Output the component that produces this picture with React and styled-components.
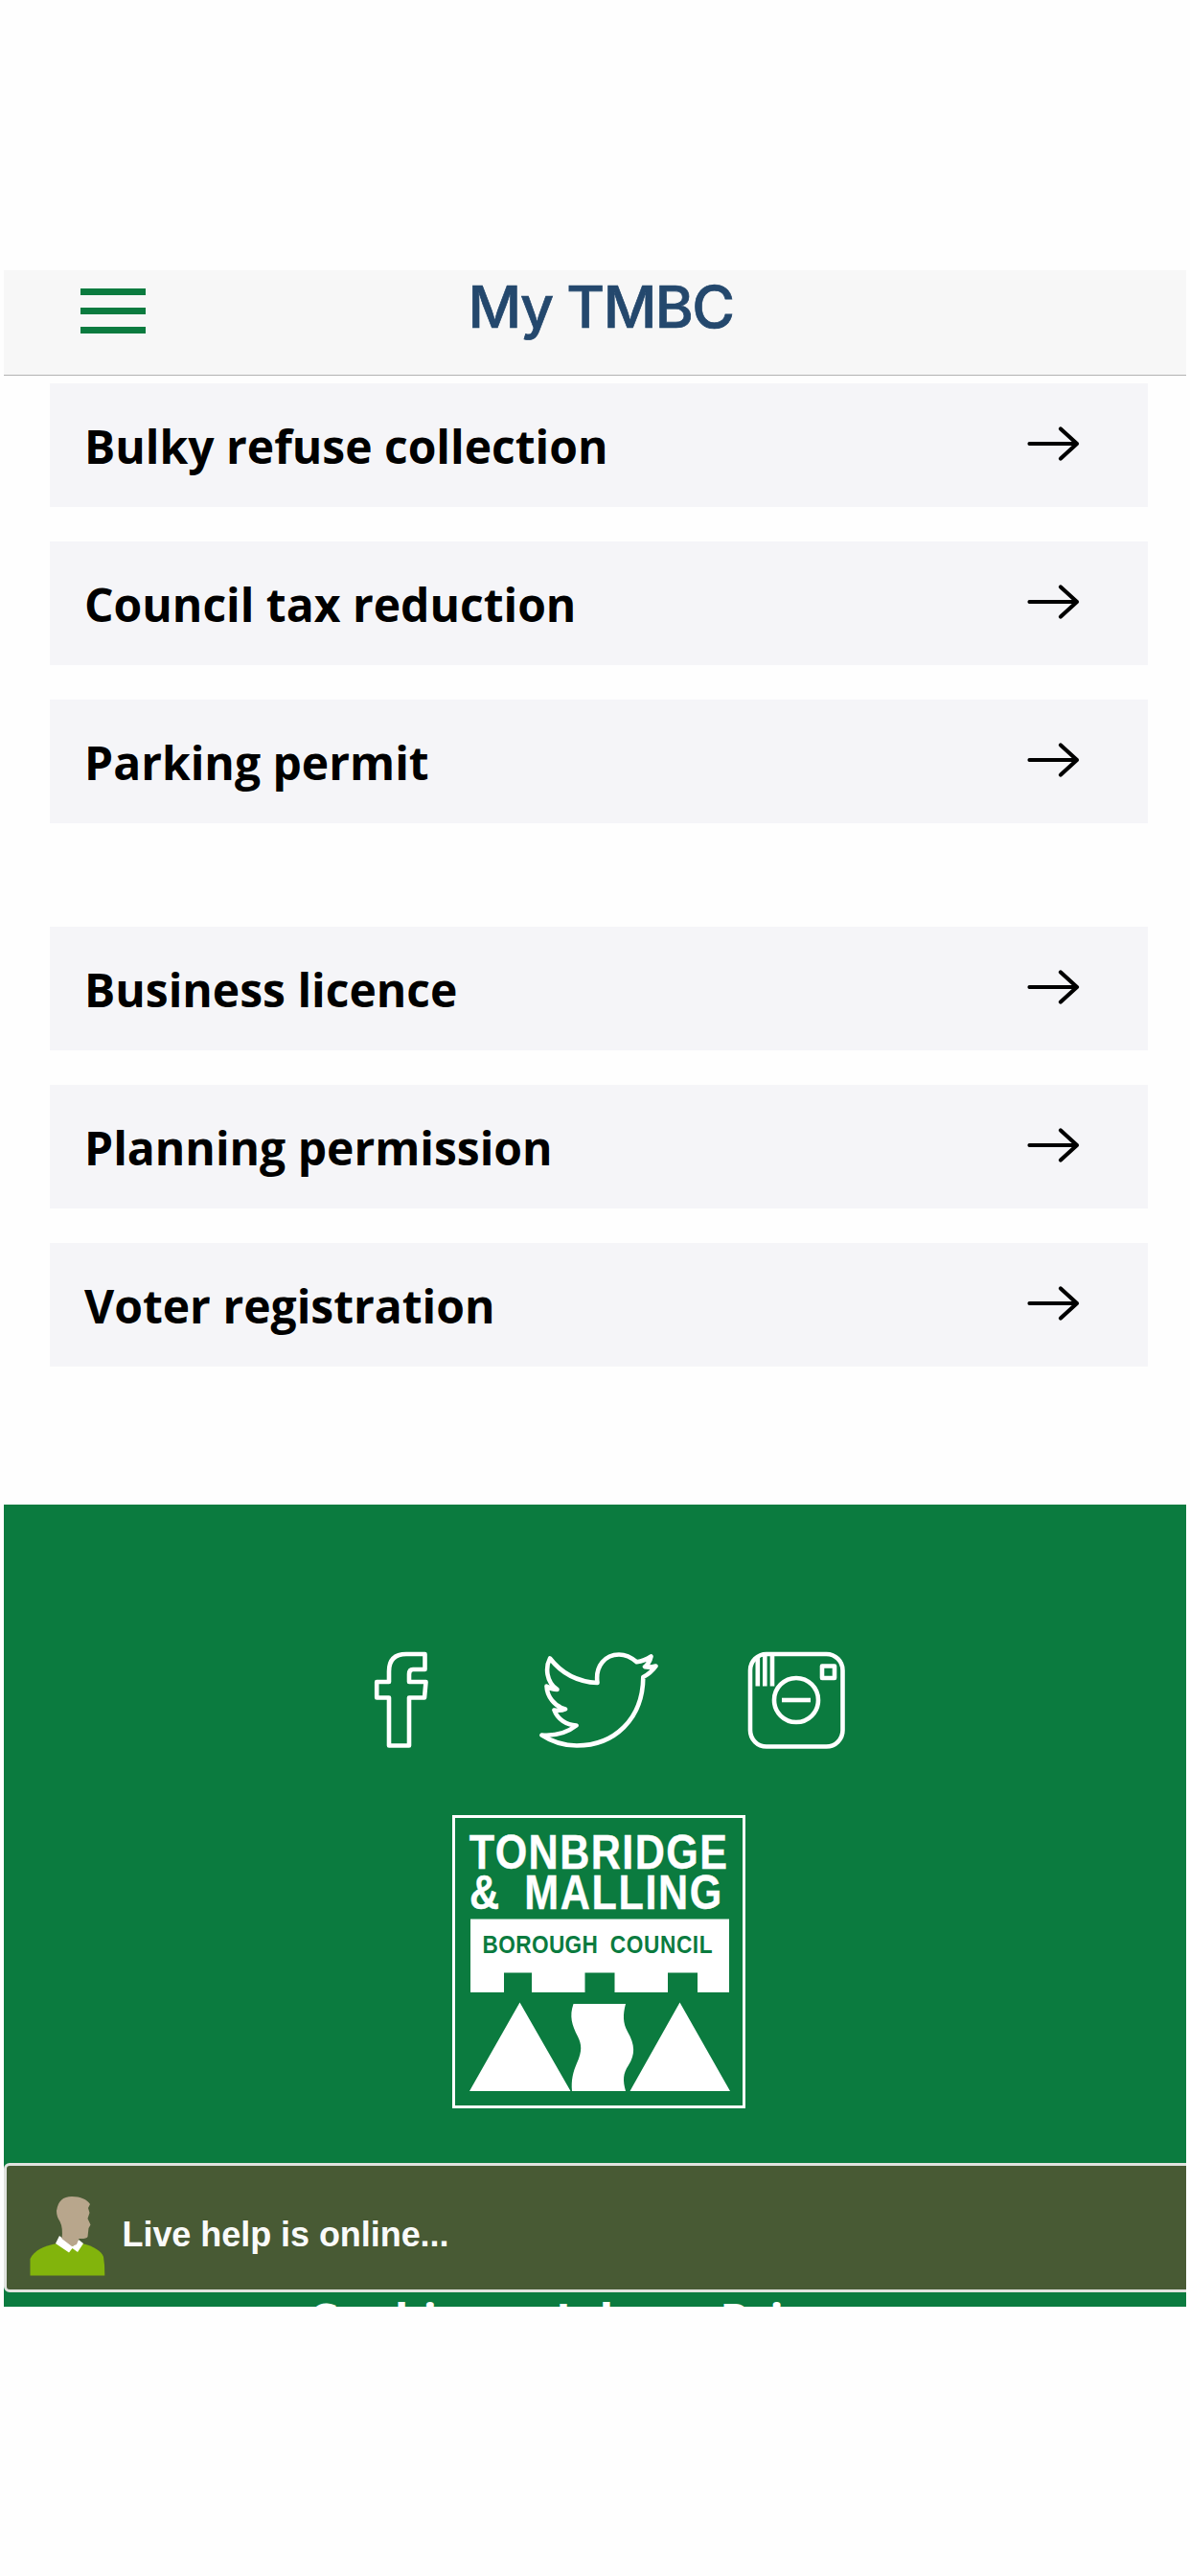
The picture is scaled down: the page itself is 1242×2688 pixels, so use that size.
import styled, { createGlobalStyle } from 'styled-components';

const GlobalStyle = createGlobalStyle`
  * {
    box-sizing: border-box;
  }

  body {
    margin: 0;
    background-color: #fefefe;
    color: #000;
    font-family: 'Open Sans', sans-serif;
  }

  a {
    color: inherit;
    text-decoration: none;
  }
`;

const StyledScreen = styled.div`
  width: 1242px;
  height: 2688px;
  padding: 282px 4px 281px;
  overflow: hidden;
`;

const StyledViewport = styled.div`
  position: relative;
  height: 2125px;
  overflow: hidden;
`;

const StyledHeader = styled.header`
  display: grid;
  grid-template-columns: 148px 1fr 148px;
  height: 110px;
  padding-left: 80px;
  padding-right: 68px;
  background-color: #f7f7f7;
  border-bottom: 1px solid #b2b2b2;
`;

const StyledMenuButton = styled.button`
  display: flex;
  flex-direction: column;
  gap: 13.3px;
  width: 68px;
  padding: 18.6px 0 0;
  background-color: transparent;
  border: none;
  cursor: pointer;

  span {
    width: 68px;
    height: 7px;
    background-color: #0b7b3f;
  }
`;

const StyledTitle = styled.h1`
  margin: 0;
  color: #24486d;
  font-family: Inter, sans-serif;
  font-size: 61px;
  font-weight: 500;
  letter-spacing: -1.5px;
  line-height: 77px;
  text-align: center;
  white-space: nowrap;
  -webkit-text-stroke: 0.7px #24486d;
`;

const StyledMain = styled.main`
  display: flex;
  flex-direction: column;
  gap: 108px;
  height: 1178px;
  padding: 8px 40px 0 48px;
`;

const StyledServiceList = styled.ul`
  display: flex;
  flex-direction: column;
  gap: 36px;
  margin: 0;
  padding: 0;
  list-style: none;
`;

const StyledServiceLink = styled.a`
  display: flex;
  justify-content: space-between;
  align-items: center;
  height: 129px;
  padding: 2px 71px 0 36px;
  background-color: #f5f5f8;
  font-size: 48px;
  font-weight: 700;
  line-height: 66px;

  svg {
    margin-bottom: 6px;
  }
`;

const StyledFooter = styled.footer`
  display: flex;
  flex-direction: column;
  align-items: center;
  height: 900px;
  padding-top: 153px;
  padding-left: 8px;
  background-color: #0b7b3f;
  color: #fff;
`;

const StyledSocial = styled.div`
  display: flex;
  align-items: flex-start;
  height: 102px;
  margin-bottom: 69px;
  margin-left: 23px;
`;

const StyledSocialLink = styled.a`
  display: block;
  height: 102px;
  margin-left: ${(props) => props.$gap || '0'};
`;

const StyledLegal = styled.nav`
  display: flex;
  gap: 71.5px;
  margin-top: 188px;
  margin-right: 2px;
  font-size: 48px;
  font-weight: 700;
  line-height: 66px;
`;

const StyledLiveHelp = styled.a`
  position: absolute;
  top: 1975px;
  left: 0;
  display: flex;
  align-items: center;
  width: 1250px;
  height: 135px;
  padding: 15px 0 0 23.5px;
  gap: 18px;
  background-color: #485a34;
  border: 3px solid #e1e3df;
  border-radius: 6px;
  color: #fafafa;
  font-family: 'Liberation Sans', Arial, sans-serif;
  font-size: 36px;
  font-weight: 700;
  letter-spacing: -0.05px;
  white-space: nowrap;

  svg {
    margin-top: 3px;
  }
`;

const residentServices = [
  'Bulky refuse collection',
  'Council tax reduction',
  'Parking permit',
];

const businessServices = [
  'Business licence',
  'Planning permission',
  'Voter registration',
];

function ArrowIcon() {
  return (
    <svg width="56" height="38" viewBox="0 0 56 38" fill="none">
      <path
        d="M3.5 19H53M36 3.5L53 19L36 34.5"
        stroke="#000"
        strokeWidth="4.2"
        strokeLinecap="round"
        strokeLinejoin="round"
      />
    </svg>
  );
}

function FacebookIcon() {
  return (
    <svg width="56" height="102" viewBox="391 1723 56 102" fill="none" overflow="visible">
      <path
        d="M443.5 1726V1742H431Q427 1742 427 1747V1755H444.5L443 1771.5H427V1821.5H406V1771.5H393.2V1755H406V1744Q406 1726 424 1726Z"
        stroke="#fff"
        strokeWidth="4.6"
        strokeLinejoin="round"
      />
    </svg>
  );
}

function TwitterIcon() {
  return (
    <svg width="124" height="102" viewBox="563 1723 124 102" fill="none" overflow="visible">
      <path
        d="M574 1730.5C586 1746 603 1755 623.5 1756C621 1738 632 1726.5 646 1726.5C654 1726.5 659 1729.5 664.5 1734.3C670 1733.5 675 1731.5 679.5 1728.5C678.5 1733 676.5 1736.5 673 1739.2C677 1740 681 1739.5 684.5 1738.5C681 1743.5 677 1747 671.3 1750C671 1794 641 1821.5 602 1821.5C588 1821.5 576 1817.5 565.5 1810.5C579 1811.5 592 1808 601.5 1800.5C591 1800 582 1794 578.5 1784.5C582 1785 586.5 1785 590 1783.5C578 1780 571 1770 570.5 1759.5C574 1762 577.5 1763 581.5 1763C570 1755 569 1740 574 1730.5Z"
        stroke="#fff"
        strokeWidth="4.6"
        strokeLinejoin="round"
      />
    </svg>
  );
}

function InstagramIcon() {
  return (
    <svg width="102" height="102" viewBox="780 1723 102 102" fill="none">
      <g stroke="#fff" strokeWidth="4.6">
        <rect x="783" y="1726" width="96.5" height="96.5" rx="17" />
        <path d="M790.8 1728V1759.5M798.3 1726V1759.5M806 1726V1759.5" />
        <circle cx="831" cy="1774" r="23" />
        <path d="M816 1774H846" />
        <rect x="858" y="1738.5" width="13" height="12.5" strokeLinejoin="round" />
      </g>
    </svg>
  );
}

function CouncilLogo() {
  return (
    <svg width="306" height="306" viewBox="0 0 306 306" fill="#fff">
      <rect x="1.5" y="1.5" width="303" height="303" fill="none" stroke="#fff" strokeWidth="3" />
      <path d="M19 108.5H289V185H256V164.5H225V185H169.5V164.5H138.5V185H83V164.5H54V185H19Z" />
      {/* condensed lettering */}
      <g
        transform="scale(0.87 1)"
        fontFamily="'Liberation Sans', Arial, sans-serif"
        fontWeight="700"
      >
        <g fontSize="49.5" stroke="#fff" strokeWidth="0.4">
          <text x="20.3" y="56" letterSpacing="1.7">TONBRIDGE</text>
          <text x="20.7" y="98">&amp;</text>
          <text x="86.5" y="98" letterSpacing="1.9">MALLING</text>
        </g>
        <g fontSize="26" fill="#0b7b3f">
          <text x="36.2" y="144.5" letterSpacing="0.45">BOROUGH</text>
          <text x="189.3" y="144.5" letterSpacing="0.75">COUNCIL</text>
        </g>
      </g>
      <path d="M70.5 195.5L123.5 288H18ZM237.5 195.5L290 288H185.5Z" />
      <path d="M126.5 197H181C178 208 178 217 183 226C191 240 191 250 184 261C178 270 178 277 181 288H125C124 277 126 268 130 259C136 246 135 239 131 231C125 219 122 210 126.5 197Z" />
    </svg>
  );
}

function AgentIcon() {
  return (
    <svg width="79" height="83" viewBox="0 0 79 83">
      <path d="M0.5 82.5V65C5 56 14 52 28 49L55 49C67 52 75 57 77 63Q78.5 72 78.3 82.5Z" fill="#82b40c" />
      <path d="M31 41L27 49L41 58.5L44.5 54L50 58L56 49L51 45L45 52Z" fill="#fff" />
      <path
        d="M44 0C53 0 60 3 63 8L61 12L62.5 17L60.5 23L63.5 29.5L61.5 33L60.5 42Q59 44.5 51.5 44L49 50L44 52L33.5 44Q35 33 31.5 26Q28 21 28 15Q30 0 44 0Z"
        fill="#b8a68c"
      />
    </svg>
  );
}

function ServiceList({ services }) {
  return (
    <StyledServiceList>
      {services.map((service) => (
        <li key={service}>
          <StyledServiceLink href="#">
            {service}
            <ArrowIcon />
          </StyledServiceLink>
        </li>
      ))}
    </StyledServiceList>
  );
}

export default function App() {
  return (
    <StyledScreen>
      <GlobalStyle />
      <StyledViewport>
        <StyledHeader>
          <StyledMenuButton type="button" aria-label="Menu">
            <span />
            <span />
            <span />
          </StyledMenuButton>
          <StyledTitle>My TMBC</StyledTitle>
        </StyledHeader>
        <StyledMain>
          <ServiceList services={residentServices} />
          <ServiceList services={businessServices} />
        </StyledMain>
        <StyledFooter>
          <StyledSocial>
            <StyledSocialLink href="#" aria-label="Facebook">
              <FacebookIcon />
            </StyledSocialLink>
            <StyledSocialLink href="#" aria-label="Twitter" $gap="116px">
              <TwitterIcon />
            </StyledSocialLink>
            <StyledSocialLink href="#" aria-label="Instagram" $gap="93px">
              <InstagramIcon />
            </StyledSocialLink>
          </StyledSocial>
          <CouncilLogo />
          <StyledLegal>
            <a href="#">Cookies</a>
            <a href="#">Jobs</a>
            <a href="#">Privacy</a>
          </StyledLegal>
        </StyledFooter>
        <StyledLiveHelp href="#">
          <AgentIcon />
          Live help is online...
        </StyledLiveHelp>
      </StyledViewport>
    </StyledScreen>
  );
}
